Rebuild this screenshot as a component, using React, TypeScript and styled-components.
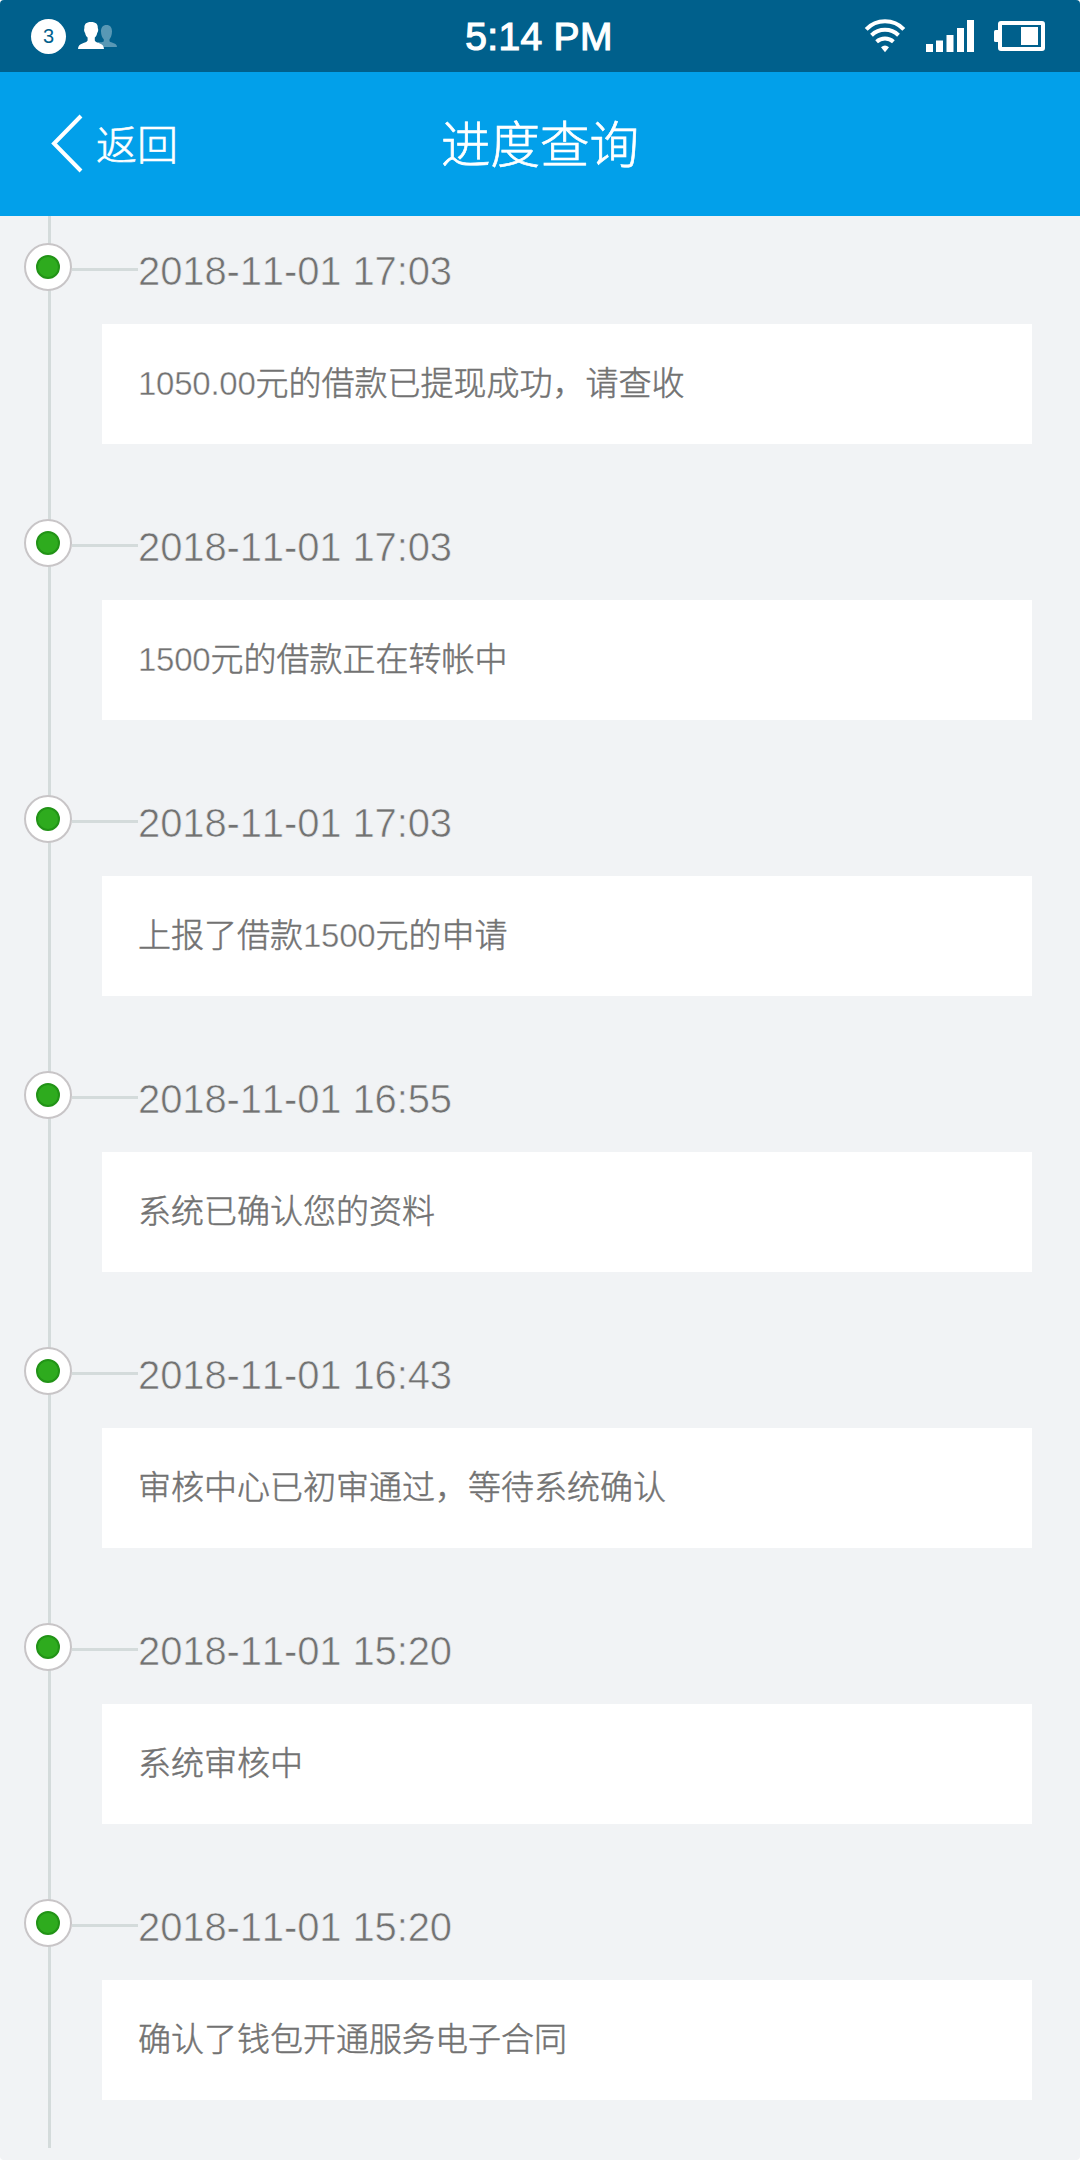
import React from "react";
import styled, { createGlobalStyle } from "styled-components";

const GlobalStyle = createGlobalStyle`
  html, body { margin: 0; padding: 0; background: #ffffff; }
  * { box-sizing: border-box; }
`;

const Screen = styled.div`
  width: 1080px;
  height: 2160px;
  overflow: hidden;
  border-radius: 4px;
  background: #f1f3f5;
  color: #727272;
  font-family: "Liberation Sans", "Noto Sans CJK SC", sans-serif;
  font-kerning: none;
`;

const StatusBar = styled.div`
  display: grid;
  grid-template-columns: 1fr auto 1fr;
  align-items: center;
  height: 72px;
  padding: 0 35px 0 31px;
  background: #00608c;
  color: #ffffff;
`;

const StatusGroup = styled.div<{ $end?: boolean }>`
  display: flex;
  align-items: center;
  gap: ${(p) => (p.$end ? "20px" : "12px")};
  justify-content: ${(p) => (p.$end ? "flex-end" : "flex-start")};
`;

const Badge = styled.span`
  display: flex;
  align-items: center;
  justify-content: center;
  width: 35px;
  height: 35px;
  border-radius: 50%;
  background: #ffffff;
  color: #00608c;
  font-size: 20px;
  line-height: 34px;
`;

const Clock = styled.span`
  padding: 2px 0 0 2px;
  font-size: 39px;
  letter-spacing: 0.3px;
  line-height: 70px;
  -webkit-text-stroke: 1.2px #ffffff;
`;

const NavBar = styled.header`
  display: grid;
  grid-template-columns: 1fr auto 1fr;
  align-items: center;
  height: 144px;
  padding: 0 50px;
  background: #02a0ea;
  color: #ffffff;
  font-family: "Noto Sans CJK SC", sans-serif;
`;

const Back = styled.button`
  display: flex;
  align-items: center;
  gap: 12px;
  padding: 0;
  border: 0;
  background: none;
  color: inherit;
  font-family: inherit;
  font-size: 41px;
  font-weight: 300;
  line-height: 56px;
  -webkit-text-stroke: 0.6px #ffffff;
`;

const BackLabel = styled.span`
  padding-bottom: 4px;
`;

const Title = styled.h1`
  margin: 0;
  padding-bottom: 4px;
  font-size: 49.5px;
  font-weight: 300;
  line-height: 72px;
  -webkit-text-stroke: 0.7px #ffffff;
`;

const Timeline = styled.ol`
  margin: 0;
  padding: 0;
  list-style: none;
`;

const Entry = styled.li`
  height: 276px;
  padding-right: 48px;
  background: linear-gradient(#d4dbdb, #d4dbdb) 48px 0 / 3px 100% no-repeat;
`;

const EntryHead = styled.div`
  display: flex;
  align-items: center;
  height: 108px;
  padding: 0 0 6px 24px;
`;

const Marker = styled.span`
  display: flex;
  align-items: center;
  justify-content: center;
  width: 48px;
  height: 48px;
  border: 2px solid #c8c5c7;
  border-radius: 50%;
  background: #ffffff;
`;

const Dot = styled.span`
  width: 24px;
  height: 24px;
  border: 2px solid #229317;
  border-radius: 50%;
  background: #2eab1e;
`;

const Connector = styled.span`
  width: 66px;
  height: 3px;
  margin-top: 5px;
  background: #d4dbdb;
`;

const Stamp = styled.time`
  padding-top: 7px;
  font-size: 40px;
  letter-spacing: -0.12px;
  line-height: 48px;
  -webkit-text-stroke: 0.6px #f1f3f5;
`;

const Card = styled.div`
  display: flex;
  align-items: center;
  height: 120px;
  margin-left: 102px;
  padding: 0 36px;
  background: #ffffff;
  font-size: 33px;
  line-height: 48px;
`;

const Message = styled.p`
  margin: 0;
  font-weight: 300;
  -webkit-text-stroke: 0.5px #727272;
`;

const Figure = styled.span`
  font-weight: 400;
  letter-spacing: -0.25px;
  -webkit-text-stroke: 0.4px #ffffff;
`;

const PeopleIcon = () => (
  <svg width="40" height="28" viewBox="0 0 40 28">
    <path
      fill="#5898b5"
      d="M28.500 3C32.300 3 34 5.500 34 9.500C34 13.200 32.700 15.700 31.500 17.200V19.200C33 21.200 39 20.500 39 25H20V20C22.500 20.500 25 20.300 25.800 19.200V17.200C24.300 15.700 23 13.200 23 9.500C23 5.500 24.700 3 28.500 3Z"
    />
    <path
      fill="#ffffff"
      d="M13 0C18 0 20 2.300 19.800 6C20.700 8 20 9.800 19.200 11C18.800 13.200 18 14.500 16.800 15.500V18.500C17.800 21.500 26 20.500 26 27H0C0 20.500 8.500 21.500 9.600 18.500V15.500C8.400 14.500 7.500 13.200 7.100 11C6.200 9.800 5.700 8 6.400 6C6.200 2.300 8 0 13 0Z"
    />
  </svg>
);

const WifiIcon = () => (
  <svg width="42" height="34" viewBox="0 0 42 34" fill="none" stroke="#ffffff" strokeWidth="4">
    <path d="M2.200 10.300A26 26 0 0 1 39.800 10.300" />
    <path d="M7.500 16.300A19.500 19.500 0 0 1 34.500 16.300" />
    <path d="M12.600 22.700A12.500 12.500 0 0 1 29.400 22.700" />
    <path fill="#ffffff" stroke="none" d="M17 28.200Q21 24.800 25 28.200L21 33.200Z" />
  </svg>
);

const SignalIcon = () => (
  <svg width="48" height="32" viewBox="0 0 48 32" fill="#ffffff">
    <path d="M0 24h7v8H0zM10 20.500h7V32h-7zM20.500 15h7v17h-7zM31 8h7v24h-7zM41 0h7v32h-7z" />
  </svg>
);

const BatteryIcon = () => (
  <svg width="51" height="30" viewBox="0 0 51 30">
    <rect x="6" y="2" width="43" height="26" rx="1" fill="none" stroke="#ffffff" strokeWidth="4" />
    <rect x="0" y="9" width="6" height="12" rx="1.500" fill="#ffffff" />
    <rect x="27" y="6" width="17" height="18" fill="#ffffff" />
  </svg>
);

const ChevronIcon = () => (
  <svg width="34" height="60" viewBox="0 0 34 60" fill="none" stroke="#ffffff" strokeWidth="4">
    <path d="M31 2L4 29.500L31 57" />
  </svg>
);

const entries = [
  { time: "2018-11-01 17:03", text: "1050.00元的借款已提现成功，请查收" },
  { time: "2018-11-01 17:03", text: "1500元的借款正在转帐中" },
  { time: "2018-11-01 17:03", text: "上报了借款1500元的申请" },
  { time: "2018-11-01 16:55", text: "系统已确认您的资料" },
  { time: "2018-11-01 16:43", text: "审核中心已初审通过，等待系统确认" },
  { time: "2018-11-01 15:20", text: "系统审核中" },
  { time: "2018-11-01 15:20", text: "确认了钱包开通服务电子合同" },
];

const renderPart = (part: string, i: number) =>
  /^\d/.test(part) ? <Figure key={i}>{part}</Figure> : part;

export default function App() {
  return (
    <Screen lang="zh-CN">
      <GlobalStyle />
      <StatusBar>
        <StatusGroup>
          <Badge>3</Badge>
          <PeopleIcon />
        </StatusGroup>
        <Clock>5:14 PM</Clock>
        <StatusGroup $end>
          <WifiIcon />
          <SignalIcon />
          <BatteryIcon />
        </StatusGroup>
      </StatusBar>
      <NavBar>
        <Back>
          <ChevronIcon />
          <BackLabel>返回</BackLabel>
        </Back>
        <Title>进度查询</Title>
      </NavBar>
      <Timeline>
        {entries.map((entry, i) => (
          <Entry key={i}>
            <EntryHead>
              <Marker>
                <Dot />
              </Marker>
              <Connector />
              <Stamp>{entry.time}</Stamp>
            </EntryHead>
            <Card>
              <Message>{entry.text.split(/([\d.]+)/).map(renderPart)}</Message>
            </Card>
          </Entry>
        ))}
      </Timeline>
    </Screen>
  );
}
